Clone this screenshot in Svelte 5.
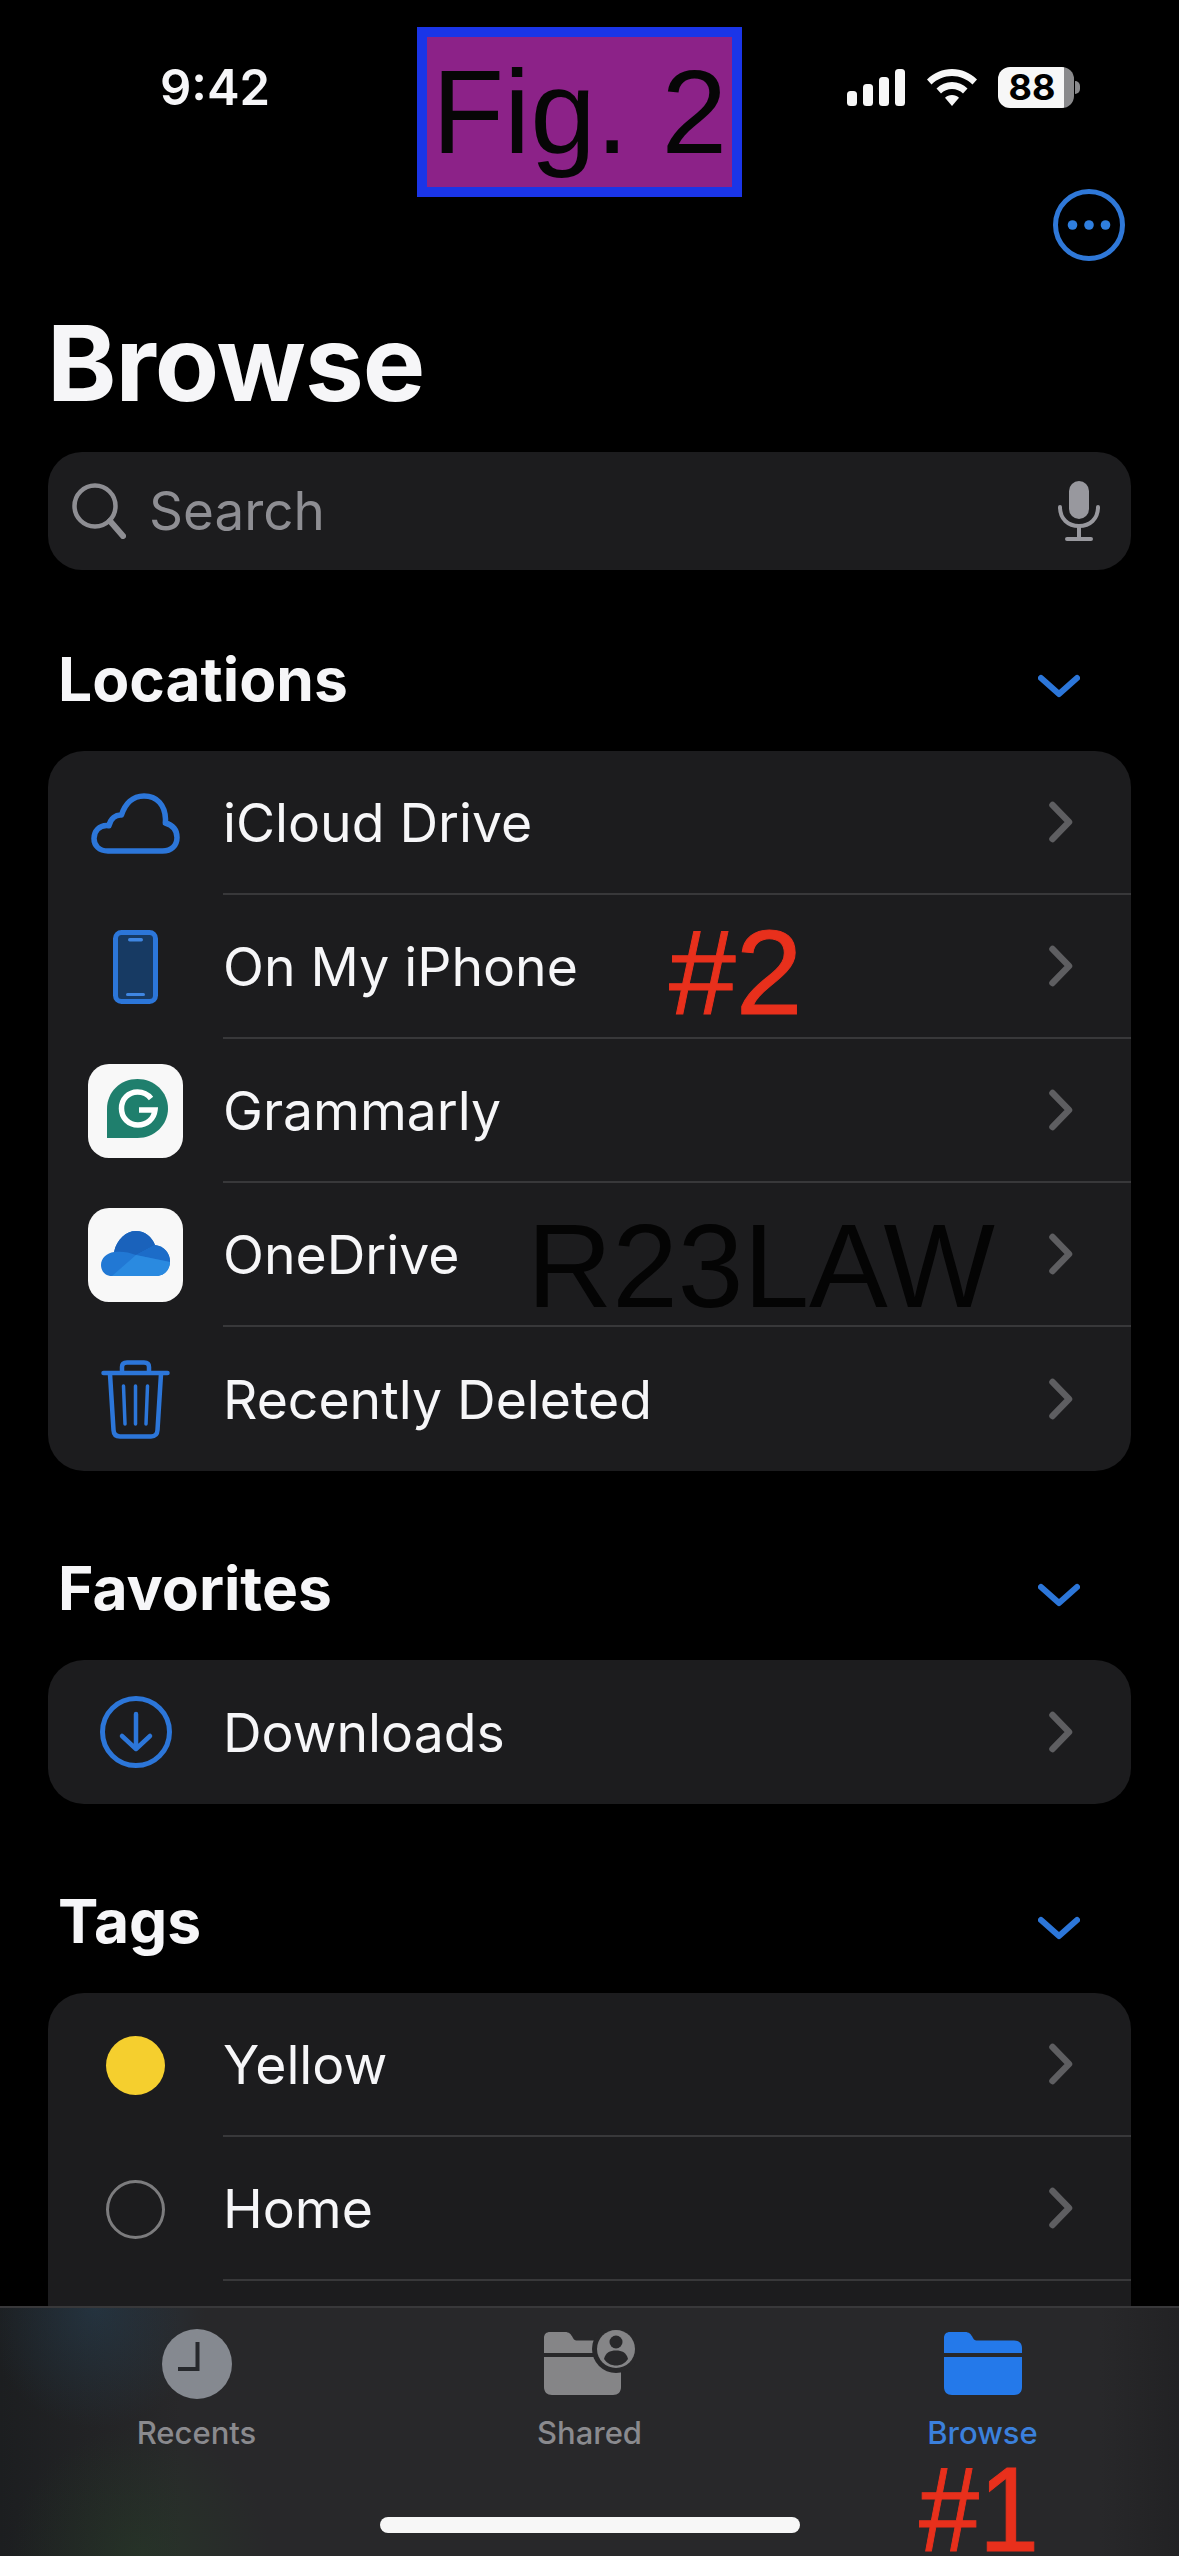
<script>
  const locations = [
    { name: 'iCloud Drive', icon: 'cloud' },
    { name: 'On My iPhone', icon: 'phone' },
    { name: 'Grammarly', icon: 'grammarly' },
    { name: 'OneDrive', icon: 'onedrive' },
    { name: 'Recently Deleted', icon: 'trash' }
  ];
  const favorites = [{ name: 'Downloads', icon: 'download' }];
  const tags = [
    { name: 'Yellow', icon: 'yellow' },
    { name: 'Home', icon: 'hollow' }
  ];
  // tags run on under the tab bar, so that card stays open at the bottom
  const sections = [
    { title: 'Locations', rows: locations },
    { title: 'Favorites', rows: favorites },
    { title: 'Tags', rows: tags, open: true }
  ];
</script>

{#snippet rowIcon(icon)}
  {#if icon === 'cloud'}
    <svg width="89" height="61" viewBox="0 0 89 61" fill="none" stroke="#2c76d9" stroke-width="5.500">
      <path d="M17 58C8 58 3 52.500 3 45.500C3 38 8.500 32.500 15.500 32.500C16 32.500 17 32.600 18 32.800C19.500 25 25 21.500 30.500 22C34 11 41.500 3 53 3C66 3 74 12 74.500 26C74.500 27.500 74.500 28.500 74.300 30C81.500 32 86 37 86 44.500C86 52.500 80.500 58 71.500 58Z" stroke-linejoin="round"/>
    </svg>
  {:else if icon === 'phone'}
    <svg width="45" height="74" viewBox="0 0 45 74">
      <rect x="2.5" y="2.5" width="40" height="69" rx="6" fill="#173a63" stroke="#2c76d9" stroke-width="5"/>
      <rect x="15" y="8" width="15" height="3.5" rx="1.7" fill="#3f86e2"/>
      <rect x="13" y="63" width="19" height="3" rx="1.5" fill="#3f86e2"/>
    </svg>
  {:else if icon === 'grammarly'}
    <span class="app">
      <svg width="95" height="94" viewBox="0 0 95 94" fill="none">
        <path d="M19 74V45C19 28 32 15 49.500 15C66.500 15 80 28 80 44.500C80 61 66.500 74 49.500 74Z" fill="#1f7f6d"/>
        <path d="M63 34.500C59.500 30 55 28 49.500 28C40.500 28 33.500 35 33.500 44.500C33.500 54 40.500 61 50 61C59 61 66 55 67 46H51" stroke="#fff" stroke-width="5.500"/>
      </svg>
    </span>
  {:else if icon === 'onedrive'}
    <span class="app">
      <svg width="95" height="94" viewBox="0 0 95 94">
        <path d="M24 68C16 68 13 62 13 57C13 50 19 45 26 44C29 31 38 23 48 23C57 23 64 29 67 37C76 38 82 45 82 53C82 62 76 68 68 68Z" fill="#2178d4"/>
        <path d="M26 44C29 31 38 23 48 23C57 23 64 29 67 37L48 47C41 44 33 43 26 44Z" fill="#1a62bb"/>
        <path d="M67 37C76 38 82 45 82 54L48 47Z" fill="#1c6cc8"/>
        <path d="M24 68L48 47L82 54C82 62 76 68 68 68Z" fill="#2a8ae0"/>
      </svg>
    </span>
  {:else if icon === 'trash'}
    <svg width="69" height="79" viewBox="0 0 69 79" fill="none" stroke="#2c76d9" stroke-width="4.500" stroke-linecap="round">
      <path d="M2.500 13H66.500"/>
      <path d="M21 12V7C21 4 23 2.500 26 2.500H43C46 2.500 48 4 48 7V12"/>
      <path d="M9 14L12.500 70C12.700 74 15 76.500 19 76.500H50C54 76.500 56.300 74 56.500 70L60 14"/>
      <path d="M22.500 26L24 64M34.500 26V64M46.500 26L45 64" stroke-width="3.500"/>
    </svg>
  {:else if icon === 'download'}
    <svg width="72" height="72" viewBox="0 0 72 72" fill="none" stroke="#2c76d9" stroke-linecap="round" stroke-linejoin="round">
      <circle cx="36" cy="36" r="33.500" stroke-width="5"/>
      <path d="M36 18V52M22 40L36 53L50 40" stroke-width="4.500"/>
    </svg>
  {:else if icon === 'yellow'}
    <span class="dot yellow"></span>
  {:else}
    <span class="dot"></span>
  {/if}
{/snippet}

<div class="page">
  <header class="status">
    <span class="time">9:42</span>
    <div class="indicators">
      <svg width="58" height="37" viewBox="0 0 58 37" fill="#f7f7f7">
        <rect x="0" y="22" width="10" height="15" rx="3.500"/>
        <rect x="16" y="15" width="10" height="22" rx="3.500"/>
        <rect x="32" y="8" width="10" height="29" rx="3.500"/>
        <rect x="48" y="0" width="10" height="37" rx="3.500"/>
      </svg>
      <svg width="50" height="37" viewBox="0 0 50 37" fill="#f7f7f7">
        <path d="M25 0C34.500 0 43 3.700 50 10.500L45.500 15.500C39.800 10 32.800 7 25 7C17.200 7 10.200 10 4.500 15.500L0 10.500C7 3.700 15.500 0 25 0Z"/>
        <path d="M25 13C31 13 36.300 15.300 40.500 19.500L36 24.500C33 21.600 29.300 20 25 20C20.700 20 17 21.600 14 24.500L9.500 19.500C13.700 15.300 19 13 25 13Z"/>
        <path d="M25 26C27.800 26 30 27 32 28.800L25 37L18 28.800C20 27 22.200 26 25 26Z"/>
      </svg>
      <div class="battery">
        <span class="cell">88</span>
        <span class="nub"></span>
      </div>
    </div>
  </header>

  <div class="toolbar">
    <svg width="72" height="72" viewBox="0 0 72 72" fill="#2f7fe0">
      <circle cx="36" cy="36" r="33.500" fill="none" stroke="#2f78d8" stroke-width="5"/>
      <circle cx="19.500" cy="36" r="4.800"/>
      <circle cx="36" cy="36" r="4.800"/>
      <circle cx="52.500" cy="36" r="4.800"/>
    </svg>
  </div>

  <h1>Browse</h1>

  <div class="search">
    <svg width="54" height="56" viewBox="0 0 54 56" fill="none" stroke="#8e8e93" stroke-linecap="round">
      <circle cx="23" cy="23" r="20.500" stroke-width="4.500"/>
      <path d="M38 38L51 53" stroke-width="6"/>
    </svg>
    <span class="placeholder">Search</span>
    <svg class="mic" width="42" height="60" viewBox="0 0 42 60" fill="none" stroke="#98989e" stroke-width="4" stroke-linecap="round">
      <rect x="11" y="0" width="20" height="38" rx="10" fill="#98989e" stroke="none"/>
      <path d="M2 26C2 38 10 45 21 45C32 45 40 38 40 26"/>
      <path d="M21 45V57M9 58H33"/>
    </svg>
  </div>

  {#each sections as section}
    <section>
      <div class="section-head">
        <h2>{section.title}</h2>
        <svg width="42" height="24" viewBox="0 0 42 24" fill="none" stroke="#2c76d9" stroke-width="6" stroke-linecap="round" stroke-linejoin="round">
          <path d="M3 4L21 20L39 4"/>
        </svg>
      </div>
      <div class="card" class:open={section.open}>
        {#each section.rows as row}
          <div class="row">
            <div class="icon">{@render rowIcon(row.icon)}</div>
            <div class="row-body">
              <span>{row.name}</span>
              <svg width="24" height="42" viewBox="0 0 24 42" fill="none" stroke="#5e5e61" stroke-width="6.500" stroke-linecap="round" stroke-linejoin="round">
                <path d="M3.500 4L20 21L3.500 38"/>
              </svg>
            </div>
          </div>
        {/each}
      </div>
    </section>
  {/each}

  <nav class="tabbar">
    <div class="tabs">
      <div class="tab">
        <svg width="70" height="70" viewBox="0 0 70 70">
          <circle cx="35" cy="35" r="35" fill="#858990"/>
          <path d="M35.500 13V40H16" fill="none" stroke="#26282c" stroke-width="4"/>
        </svg>
        <span>Recents</span>
      </div>
      <div class="tab">
        <svg width="92" height="70" viewBox="0 0 92 70">
          <path d="M0 24V9C0 5 2.500 3 6 3H21C25 3 27 5 29 9C30 11 31 11.500 34 11.500H70C74 11.500 77 14 77 18V24Z" fill="#858587"/>
          <path d="M0 28H77V58C77 63 74 66 69 66H8C3 66 0 63 0 58Z" fill="#858587"/>
          <circle cx="72" cy="20" r="24" fill="#28282a"/>
          <circle cx="72" cy="20" r="19" fill="#858587"/>
          <circle cx="72" cy="13" r="6.500" fill="#28282a"/>
          <path d="M60 30C61.500 23.500 66 21.500 72 21.500C78 21.500 82.500 23.500 84 30C81 34.500 76.500 36.500 72 36.500C67.500 36.500 63 34.500 60 30Z" fill="#28282a"/>
        </svg>
        <span>Shared</span>
      </div>
      <div class="tab active">
        <svg width="78" height="70" viewBox="0 0 78 70" fill="#2479ea">
          <path d="M0 24V9C0 5 2.500 3 6 3H21C25 3 27 5 29 9C30 11 31 11.500 34 11.500H70C75 11.500 78 14 78 19V24Z"/>
          <path d="M0 28H78V58C78 63 75 66 70 66H8C3 66 0 63 0 58Z"/>
        </svg>
        <span>Browse</span>
      </div>
    </div>
    <div class="home-bar"></div>
  </nav>

  <div class="fig">Fig. 2</div>
  <div class="mark mark-two">#2</div>
  <div class="mark mark-one">#1</div>
  <div class="watermark">R23LAW</div>
</div>

<style>
  :global(body) {
    margin: 0;
    background: #000;
  }
  .page {
    position: relative;
    width: 1179px;
    height: 2556px;
    overflow: hidden;
    background: #000;
    color: #f6f6f8;
    font-family: Inter, "Liberation Sans", sans-serif;
  }
  svg {
    display: block;
    flex: none;
  }
  .status {
    display: flex;
    align-items: center;
    justify-content: space-between;
    height: 174px;
    padding: 0 99px 0 160px;
    box-sizing: border-box;
  }
  .time {
    font-size: 49px;
    font-weight: 600;
  }
  .indicators {
    display: flex;
    align-items: center;
    gap: 22px;
  }
  .battery {
    display: flex;
    align-items: center;
    gap: 1px;
    margin-left: -1px;
  }
  .cell {
    width: 76px;
    height: 41px;
    border-radius: 12px;
    background: linear-gradient(90deg, #f7f7f7 87%, #8a8a8c 87%);
    color: #000;
    font-size: 36px;
    font-weight: 700;
    line-height: 41px;
    text-align: center;
    text-indent: -8px;
  }
  .nub {
    width: 5px;
    height: 13px;
    border-radius: 0 5px 5px 0;
    background: #8a8a8c;
  }
  .toolbar {
    display: flex;
    justify-content: flex-end;
    padding: 15px 54px 0 0;
  }
  h1 {
    margin: 42px 0 0 47px;
    font-size: 105px;
    font-weight: 700;
    line-height: 120px;
    letter-spacing: -1px;
  }
  .search {
    display: flex;
    align-items: center;
    height: 118px;
    margin: 29px 48px 0;
    padding: 0 31px 0 24px;
    border-radius: 34px;
    background: #1c1c1e;
  }
  .placeholder {
    margin-left: 23px;
    color: #8e8e93;
    font-size: 53px;
  }
  .mic {
    margin-left: auto;
  }
  section {
    margin-top: 81px;
  }
  .search + section {
    margin-top: 73px;
  }
  .section-head {
    display: flex;
    align-items: center;
    justify-content: space-between;
    height: 72px;
    margin-bottom: 36px;
    padding: 0 99px 0 58px;
  }
  .section-head svg {
    margin-top: 14px;
  }
  h2 {
    margin: 0;
    font-size: 60.5px;
    font-weight: 700;
    line-height: 72px;
  }
  .card {
    margin: 0 48px;
    border-radius: 36px;
    background: #1c1c1e;
  }
  .card.open {
    padding-bottom: 60px;
  }
  .row {
    display: flex;
    height: 144px;
  }
  .icon {
    display: flex;
    align-items: center;
    justify-content: center;
    flex: none;
    width: 175px;
  }
  .row-body {
    display: flex;
    flex: 1;
    align-items: center;
    justify-content: space-between;
    padding-right: 58px;
    border-bottom: 2px solid #38383a;
    font-size: 53.5px;
  }
  .row:last-child .row-body {
    border-bottom: 0;
  }
  .card.open .row:last-child .row-body {
    border-bottom: 2px solid #38383a;
  }
  .app {
    display: block;
    width: 95px;
    height: 94px;
    border-radius: 21px;
    background: #f8f8f8;
  }
  .dot {
    display: block;
    width: 59px;
    height: 59px;
    box-sizing: border-box;
    border: 3px solid #7c7c7e;
    border-radius: 50%;
  }
  .dot.yellow {
    border: 0;
    background: #f5cf2e;
  }
  .tabbar {
    position: absolute;
    left: 0;
    right: 0;
    bottom: 0;
    height: 250px;
    border-top: 2px solid #38383a;
    box-sizing: border-box;
    background:
      radial-gradient(ellipse 110px 120px at 95px 0, rgba(40, 80, 110, 0.35), transparent),
      radial-gradient(ellipse 130px 130px at 140px 100%, rgba(40, 80, 40, 0.3), transparent),
      linear-gradient(90deg, #1c1e20 0, #28282a 180px, #28282a 1100px, #222224 100%);
  }
  .tabs {
    display: grid;
    grid-template-columns: repeat(3, 1fr);
    padding-top: 21px;
  }
  .tab {
    display: flex;
    flex-direction: column;
    align-items: center;
    gap: 15px;
    color: #8a8a8e;
    font-size: 31px;
    font-weight: 500;
  }
  .tab.active {
    color: #3b80dc;
  }
  .home-bar {
    position: absolute;
    left: 380px;
    top: 209px;
    width: 420px;
    height: 16px;
    border-radius: 8px;
    background: #f7f7f7;
  }
  .fig {
    position: absolute;
    left: 417px;
    top: 27px;
    width: 325px;
    height: 170px;
    box-sizing: border-box;
    border: 10px solid #1a35e8;
    background: #8c2288;
    color: #060606;
    font-family: "Liberation Sans", sans-serif;
    font-size: 118px;
    line-height: 150px;
    text-align: center;
    white-space: nowrap;
  }
  .mark {
    position: absolute;
    color: #e8301c;
    font-family: "Liberation Sans", sans-serif;
    -webkit-text-stroke: 1px #e8301c;
  }
  .mark-two {
    left: 669px;
    top: 912px;
    font-size: 120px;
    line-height: 120px;
  }
  .mark-one {
    left: 919px;
    top: 2462px;
    font-size: 120px;
    line-height: 94px;
    transform: scaleX(0.9);
    transform-origin: left;
  }
  .watermark {
    position: absolute;
    left: 527px;
    top: 1207px;
    color: #040404;
    font-family: "Liberation Sans", sans-serif;
    font-size: 118px;
    line-height: 1;
  }
</style>
